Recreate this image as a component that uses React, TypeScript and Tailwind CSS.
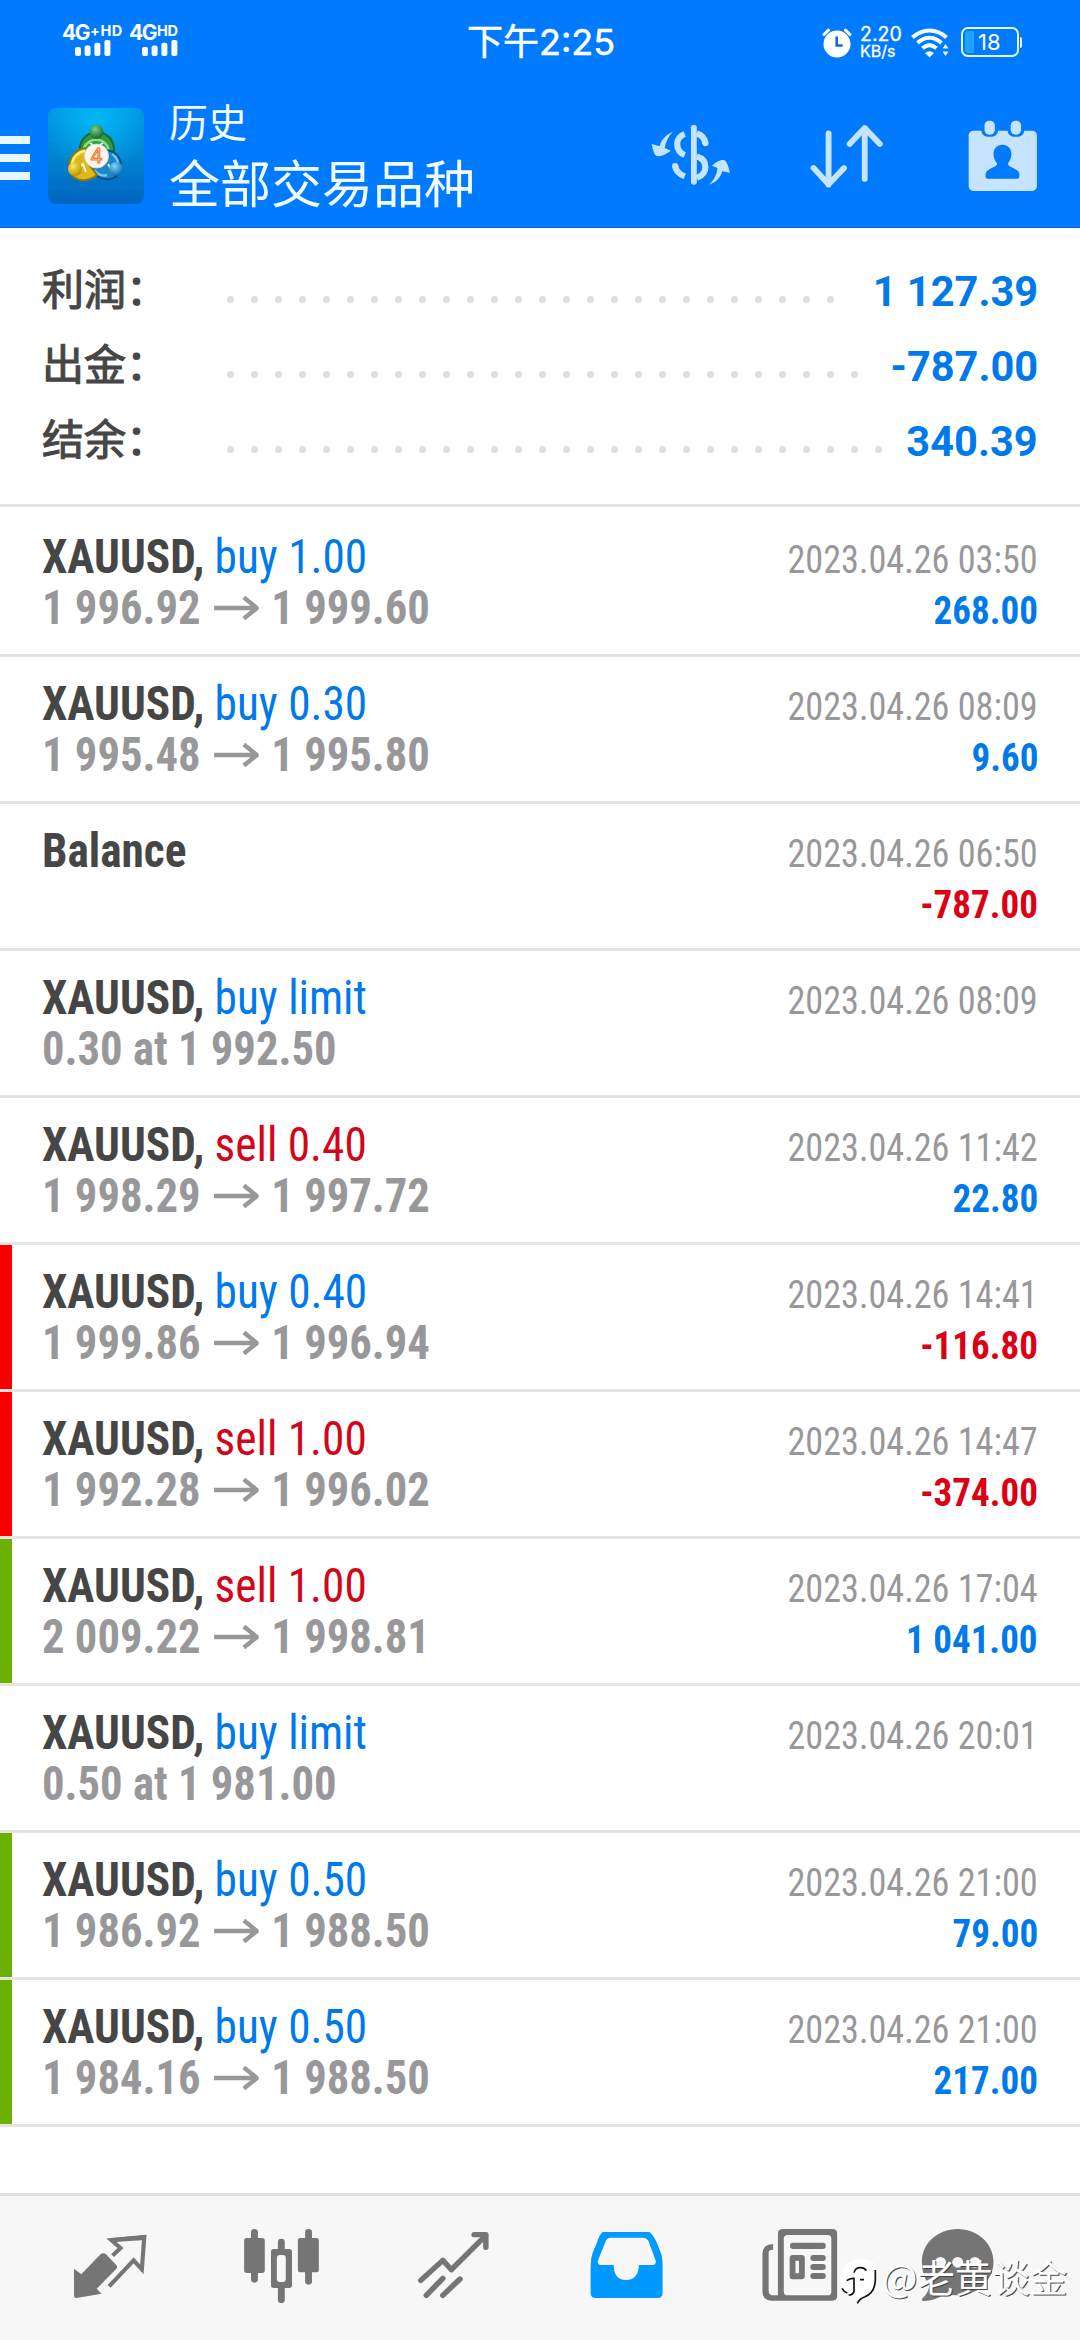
import type { ReactNode } from 'react'

type Side = 'buy' | 'sell'

interface Deal {
  symbol: string
  side?: Side
  action?: string
  from?: string
  to?: string
  note?: string
  time: string
  profit?: string
  mark?: 'sl' | 'tp'
}

const summary = [
  { label: '利润：', value: '1 127.39', dots: 26 },
  { label: '出金：', value: '-787.00', dots: 27 },
  { label: '结余：', value: '340.39', dots: 28 },
]

const deals: Deal[] = [
  { symbol: 'XAUUSD,', side: 'buy', action: 'buy 1.00', from: '1 996.92', to: '1 999.60', time: '2023.04.26 03:50', profit: '268.00' },
  { symbol: 'XAUUSD,', side: 'buy', action: 'buy 0.30', from: '1 995.48', to: '1 995.80', time: '2023.04.26 08:09', profit: '9.60' },
  { symbol: 'Balance', time: '2023.04.26 06:50', profit: '-787.00' },
  { symbol: 'XAUUSD,', side: 'buy', action: 'buy limit', note: '0.30 at 1 992.50', time: '2023.04.26 08:09' },
  { symbol: 'XAUUSD,', side: 'sell', action: 'sell 0.40', from: '1 998.29', to: '1 997.72', time: '2023.04.26 11:42', profit: '22.80' },
  { symbol: 'XAUUSD,', side: 'buy', action: 'buy 0.40', from: '1 999.86', to: '1 996.94', time: '2023.04.26 14:41', profit: '-116.80', mark: 'sl' },
  { symbol: 'XAUUSD,', side: 'sell', action: 'sell 1.00', from: '1 992.28', to: '1 996.02', time: '2023.04.26 14:47', profit: '-374.00', mark: 'sl' },
  { symbol: 'XAUUSD,', side: 'sell', action: 'sell 1.00', from: '2 009.22', to: '1 998.81', time: '2023.04.26 17:04', profit: '1 041.00', mark: 'tp' },
  { symbol: 'XAUUSD,', side: 'buy', action: 'buy limit', note: '0.50 at 1 981.00', time: '2023.04.26 20:01' },
  { symbol: 'XAUUSD,', side: 'buy', action: 'buy 0.50', from: '1 986.92', to: '1 988.50', time: '2023.04.26 21:00', profit: '79.00', mark: 'tp' },
  { symbol: 'XAUUSD,', side: 'buy', action: 'buy 0.50', from: '1 984.16', to: '1 988.50', time: '2023.04.26 21:00', profit: '217.00', mark: 'tp' },
]

function SignalBars() {
  return (
    <svg className="h-4 w-9" viewBox="0 0 36 16" fill="currentColor">
      <rect x="0" y="7" width="6" height="9" rx="2" />
      <rect x="9.6" y="5.5" width="6" height="10.5" rx="2" />
      <rect x="19.4" y="2.7" width="6" height="13.3" rx="2" />
      <rect x="29.4" y="0" width="6" height="16" rx="2" />
    </svg>
  )
}

function StatusBar() {
  return (
    <div className="flex h-[84px] font-['Inter','Noto_Sans_CJK_SC',sans-serif] text-white">
      <div className="flex w-[467px] pt-[24px] pl-[62px]">
        <div className="flex w-[67px] flex-col">
          <div className="flex h-[16px] text-[21px] leading-[18px] font-bold tracking-[-1.5px]">
            <span>4G</span>
            <span className="pl-px text-[14.5px] leading-[13px] tracking-[0.6px]">+HD</span>
          </div>
          <div className="pl-[13px]"><SignalBars /></div>
        </div>
        <div className="flex flex-col">
          <div className="flex h-[16px] text-[21px] leading-[18px] font-bold tracking-[-1.5px]">
            <span>4G</span>
            <span className="pl-px text-[14.5px] leading-[13px] tracking-[-0.3px]">HD</span>
          </div>
          <div className="pl-[13px]"><SignalBars /></div>
        </div>
      </div>
      <div className="w-[354px] pt-[16px] text-[36px] leading-[52px] whitespace-nowrap [-webkit-text-stroke:0.5px]">下午2:25</div>
      <svg className="mt-[27px] ml-px h-[32px] w-[32px]" viewBox="0 0 32 32">
        <circle cx="15" cy="17" r="13.5" fill="#fff" />
        <path d="M2 7.5 6.5 3.2M28 7.5 23.5 3.2" stroke="#fff" strokeWidth="3" strokeLinecap="round" />
        <path d="M14.7 9.5v9h6" fill="none" stroke="#0a6be0" strokeWidth="2.6" />
      </svg>
      <div className="mt-[25px] ml-[6px] w-[46px]">
        <div className="text-[19.5px] leading-[19px] [-webkit-text-stroke:0.3px]">2.20</div>
        <div className="text-[16px] leading-[15px] [-webkit-text-stroke:0.3px]">KB/s</div>
      </div>
      <svg className="mt-[27px] ml-[5px] h-[32px] w-[40px]" viewBox="0 0 40 32" fill="none" stroke="#f2fbff">
        <path d="M1.5 10.5C11.5 1 25.5 1 35.5 10.5" strokeWidth="4" />
        <path d="M6.5 16C14 9 23 9 30.5 16" strokeWidth="4" />
        <path d="M11.5 21.3C16 17.3 21 17.3 25.5 21.3" strokeWidth="4" />
        <path d="M14 26.2q4.500-4 9 0l-4.500 4z" fill="#f2fbff" stroke="none" />
        <path d="M31.500 21.500h6l-3-4.500zM31.500 24.500h6l-3 4.500z" fill="#d9f1ff" stroke="none" />
      </svg>
      <div className="mt-[27px] ml-[10px] flex h-[30px] items-center">
        <div className="flex h-[30px] w-[58px] items-center rounded-[7px] border-[2.5px] border-[#e6f8ff] pl-[2px]">
          <div className="h-[22px] w-[9px] rounded-l-[3px] bg-[#22a2ff]" />
          <div className="pl-[4px] text-[22px] leading-[24px]">18</div>
        </div>
        <div className="ml-px h-[11px] w-[2px] rounded-r bg-[#e6f8ff]" />
      </div>
    </div>
  )
}

function AppLogo() {
  return (
    <svg className="h-24 w-24" viewBox="0 0 96 96">
      <defs>
        <linearGradient id="bg" x1="0" y1="0" x2="0" y2="1">
          <stop offset="0" stopColor="#0296e6" />
          <stop offset="0.5" stopColor="#0284d0" />
          <stop offset="1" stopColor="#0063c0" />
        </linearGradient>
        <radialGradient id="glow" cx="0.5" cy="0.12" r="0.55">
          <stop offset="0" stopColor="#00b8f4" />
          <stop offset="1" stopColor="#00b8f4" stopOpacity="0" />
        </radialGradient>
        <radialGradient id="green" cx="0.4" cy="0.3" r="0.7">
          <stop offset="0" stopColor="#7ed07c" />
          <stop offset="1" stopColor="#13692e" />
        </radialGradient>
        <radialGradient id="gold" cx="0.35" cy="0.3" r="0.75">
          <stop offset="0" stopColor="#ffe95a" />
          <stop offset="1" stopColor="#b88d06" />
        </radialGradient>
        <radialGradient id="blue" cx="0.4" cy="0.3" r="0.7">
          <stop offset="0" stopColor="#7cd4fa" />
          <stop offset="1" stopColor="#0c6cb4" />
        </radialGradient>
      </defs>
      <rect width="96" height="96" rx="8" fill="url(#bg)" />
      <rect width="96" height="96" rx="8" fill="url(#glow)" />
      <path d="M16 0v96M32 0v96M48 0v96M64 0v96M80 0v96M0 16h96M0 32h96M0 48h96M0 64h96M0 80h96" stroke="#5cc4ff" strokeOpacity="0.06" />
      <path d="M32 42a17 17 0 1 1 30 10l-14-6z" fill="#2f9a45" stroke="#17692c" strokeWidth="2" />
      <path d="M36 40a13 13 0 0 1 25 3" fill="none" stroke="#8edc84" strokeWidth="2.5" />
      <path d="M58 42a16 16 0 0 1 15 16c0 10-8 14-16 13-8-1-13-6-14-14z" fill="#1b86cc" stroke="#0a4f8c" strokeWidth="2" />
      <path d="M64 46a13 13 0 0 1 6 12M46 62q6 7 13 5" fill="none" stroke="#6cc8f4" strokeWidth="2.5" />
      <path d="M38 40c-10 1-17 9-17 19 0 9 8 14 17 13 5-1 9-3 11-5l-10-13z" fill="#dcb916" stroke="#8c7808" strokeWidth="2" />
      <path d="M24 57a15 15 0 0 1 13-14" fill="none" stroke="#fff07a" strokeWidth="2.5" />
      <path d="m42 35 6 4 7-4M31 60l4-4 3 8M60 56l3 5 4-4" fill="none" stroke="#eef8e8" strokeWidth="2" />
      <circle cx="48.5" cy="24" r="7" fill="url(#green)" />
      <circle cx="27" cy="61" r="7" fill="url(#gold)" />
      <circle cx="68" cy="61" r="7" fill="url(#blue)" />
      <circle cx="48.5" cy="48" r="12" fill="#fdf6f0" stroke="#d8d8d0" />
      <text x="48.5" y="55" textAnchor="middle" fontFamily="Inter, sans-serif" fontSize="20" fill="#ffe0c0" stroke="#f07a30" strokeWidth="1.1">4</text>
    </svg>
  )
}

function Toolbar() {
  return (
    <div className="flex h-36 items-center pr-[42px] font-['Noto_Sans_CJK_SC',sans-serif] text-[#f2fbff]">
      <div className="mt-1 flex w-[30px] flex-col gap-[10px]">
        <span className="h-2 bg-[#e9f6ff]" />
        <span className="h-2 bg-[#e9f6ff]" />
        <span className="h-2 bg-[#e9f6ff]" />
      </div>
      <div className="ml-[18px]"><AppLogo /></div>
      <div className="mb-[8px] ml-[25px] flex flex-1 flex-col">
        <span className="h-[57px] text-[39px] leading-[56px]">历史</span>
        <span className="h-[64px] text-[51px] leading-[64px] whitespace-nowrap">全部交易品种</span>
      </div>
      <svg className="h-[73.3px] w-[79.9px]" viewBox="320 355 232 220" preserveAspectRatio="none" fill="#c6e4ff">
        <rect x="436" y="373" width="17" height="179" rx="7" />
        <path d="M383 393C365 402 350 415 345 437L322 430C325 445 328 458 333 464C340 470 355 466 378 450L360 442C362 425 370 408 383 393ZM489 552C510 545 522 530 527 512L549 516C546 500 542 488 536 480C530 476 515 478 497 495L513 502C512 520 503 538 489 552Z" />
        <g fill="none" stroke="#c6e4ff" strokeWidth="18">
          <path d="M418 400Q396 408 396 431Q397 455 418 463M453 467Q478 475 478 499Q478 521 453 532" />
          <path d="M453 398Q475 405 478 428M390 496Q394 518 418 527" />
        </g>
        <circle cx="478" cy="428" r="9" />
        <circle cx="390" cy="496" r="9" />
      </svg>
      <svg className="ml-[79.3px] h-[73.3px] w-[73.3px]" viewBox="782 355 213 220" preserveAspectRatio="none" fill="none" stroke="#c6e4ff" strokeWidth="17" strokeLinecap="round" strokeLinejoin="round">
        <path d="M836 398V552M792 502L836 551L881 502M941 535V382M897 430L941 382L985 430" />
      </svg>
      <svg className="ml-[84.7px] h-[73.3px] w-[69.6px]" viewBox="1241 355 202 220" preserveAspectRatio="none">
        <rect x="1243" y="390" width="198" height="181" rx="14" fill="#c6e4ff" />
        <rect x="1280" y="350" width="48" height="58" rx="18" fill="#007bff" />
        <rect x="1356" y="350" width="48" height="58" rx="18" fill="#007bff" />
        <rect x="1289" y="360" width="30" height="42" rx="14" fill="#c6e4ff" />
        <rect x="1365" y="360" width="30" height="42" rx="14" fill="#c6e4ff" />
        <path d="M1341 432c16 0 26 12 26 28 0 14-6 22-10 29 2 13 33 14 33 32v8q0 5-6 5h-86q-6 0-6-5v-8c0-18 33-20 34-32-5-7-11-15-11-29 0-16 10-28 26-28z" fill="#007bff" />
      </svg>
    </div>
  )
}

function Summary() {
  return (
    <section className="h-[279px] border-b-[3px] border-[#e4e4e4] pt-[25px]">
      {summary.map((row) => (
        <div key={row.label} className="flex h-[75px] pr-[42px] pl-[42px]">
          <span className="w-[176px] font-['Noto_Sans_CJK_SC',sans-serif] text-[42px] leading-[68px] text-[#464646] [-webkit-text-stroke:1.1px]">
            {row.label}
          </span>
          <span className="flex pt-[43px]">
            {Array.from({ length: row.dots }, (_, i) => (
              <i key={i} className="mx-[8.5px] h-[7px] w-[7px] rounded-full bg-[#dedede]" />
            ))}
          </span>
          <span className="ml-auto origin-right scale-x-[0.99] font-['Roboto',sans-serif] text-[42px] leading-[78px] font-bold whitespace-nowrap text-[#007aea]">
            {row.value}
          </span>
        </div>
      ))}
    </section>
  )
}

function PriceArrow() {
  return (
    <svg className="mx-[14px] h-[24px] w-[48px] self-center" viewBox="0 0 48 24" fill="none" stroke="#98989a" strokeWidth="4.6">
      <path d="M0 12H46M32 1.500 46 12 32 22.500" />
    </svg>
  )
}

function DealRow({ deal }: { deal: Deal }) {
  const actionColor = deal.side === 'sell' ? 'text-[#d2061a]' : 'text-[#007aea]'
  const profitColor = deal.profit?.startsWith('-') ? 'text-[#dc0014]' : 'text-[#007aea]'
  const markColor = deal.mark === 'sl' ? 'bg-[#f80000]' : deal.mark === 'tp' ? 'bg-[#6cb000]' : ''

  return (
    <div className="flex h-[147px] border-b-[3px] border-[#e4e4e4] font-['Roboto_Condensed','Roboto',sans-serif] whitespace-nowrap [font-stretch:75%]">
      <div className={`w-3 ${markColor}`} />
      <div className="flex flex-1 flex-col pt-[21px] pr-[42px] pl-[30px]">
        <div className="flex h-[51px] items-baseline justify-between leading-[51px]">
          <span className="origin-left scale-x-[0.944] text-[48px]">
            <b className="text-[#464646]">{deal.symbol}</b>
            <span className={actionColor}> {deal.action}</span>
          </span>
          <span className="origin-right scale-x-[0.928] text-[39px] text-[#98989a]">{deal.time}</span>
        </div>
        <div className="flex h-[51px] items-baseline justify-between leading-[51px] font-bold">
          <span className="flex origin-left scale-x-[0.93] text-[48px] text-[#98989a]">
            {deal.from ?? deal.note ?? '\u00a0'}
            {deal.to && <PriceArrow />}
            {deal.to}
          </span>
          <span className={`origin-right scale-x-[0.95] text-[39px] ${profitColor}`}>{deal.profit}</span>
        </div>
      </div>
    </div>
  )
}

function Tab({ x, children }: { x: number; children: ReactNode }) {
  return (
    <svg className="h-36 w-[172px]" viewBox={`${x} 48 499.5 432`} preserveAspectRatio="none" fill="#757575">
      {children}
    </svg>
  )
}

function TabBar() {
  return (
    <nav className="relative mt-auto flex h-[147px] border-t-[3px] border-[#e0e0e0] bg-[#f7f7f7] pl-6">
      <Tab x={69.7}>
        <path d="M215 266L236 283L292 223Q300 216 308 223L338 256Q342 261 338 266L281 326L295 341L222 354Q215 354 215 348Z" />
        <path d="M327 227L350 204L323 180L419 171L412 268L388 241L317 319" fill="none" stroke="#757575" strokeWidth="12" />
        <path d="M318 175L425 165L423 180L330 186Z" />
      </Tab>
      <Tab x={569.2}>
        <rect x="709" y="174" width="60" height="105" rx="8" />
        <rect x="787" y="207" width="61" height="117" rx="8" />
        <rect x="865" y="174" width="61" height="103" rx="8" />
        <rect x="729" y="147" width="20" height="161" rx="10" />
        <rect x="807" y="176" width="20" height="193" rx="10" />
        <rect x="886" y="147" width="20" height="167" rx="10" />
        <rect x="804" y="225" width="26" height="81" rx="9" fill="#f7f7f7" />
      </Tab>
      <Tab x={1068.7}>
        <g fill="none" stroke="#757575" strokeWidth="16" strokeLinecap="round" strokeLinejoin="round">
          <path d="M1222 301L1286 241L1311 269L1405 172" />
          <path d="M1377 164H1411V202" />
          <path d="M1238 346L1286 295M1286 346L1336 297" />
        </g>
      </Tab>
      <Tab x={0}>
        <path d="M182 156H318Q330 166 340 190L352 222Q356 235 356 260V340Q356 354 342 354H162Q147 354 147 340V260Q147 235 153 218L166 186Q172 166 182 156Z" fill="#0099ff" />
        <path d="M203 173H301Q311 174 315 183L336 242Q338 254 327 255H287C287 282 275 300 250 300S214 282 214 255H177Q166 254 168 242L192 181Q196 174 203 173Z" fill="#f7f7f7" />
      </Tab>
      <Tab x={499.5}>
        <path d="M677 192V209Q664 208 664 218V332Q664 346 678 346H691V160Q691 147 706 147H849Q863 147 863 161V348Q863 362 849 362H672Q646 362 646 334V222Q646 192 677 192Z" />
        <rect x="708" y="165" width="138" height="181" rx="11" fill="#f7f7f7" />
        <rect x="726" y="188" width="104" height="19" rx="9" />
        <rect x="725" y="225" width="44" height="73" rx="9" />
        <rect x="742" y="242" width="10" height="38" rx="2" fill="#f7f7f7" />
        <rect x="785" y="225" width="45" height="18" rx="9" />
        <rect x="785" y="252" width="45" height="18" rx="9" />
        <rect x="785" y="279" width="45" height="18" rx="9" />
      </Tab>
      <Tab x={999}>
        <path d="M1213 147C1270 147 1317 190 1317 246C1317 300 1272 346 1213 346Q1192 346 1174 341Q1150 362 1113 363Q1107 362 1110 356Q1128 340 1131 315Q1109 288 1109 246C1109 190 1155 147 1213 147Z" />
        <circle cx="1163" cy="247" r="16" fill="#f7f7f7" />
        <circle cx="1213" cy="247" r="16" fill="#f7f7f7" />
        <circle cx="1263" cy="247" r="16" fill="#f7f7f7" />
      </Tab>
      <div className="absolute top-[60px] left-[838px] flex text-white">
        <svg className="mt-[2px] h-[48px] w-[44px]" viewBox="24 114 132 144">
          <path d="M85 118H105Q137 122 137 152V185Q136 220 104 230Q90 236 83 248V232Q34 226 31 176Q36 122 85 118Z" fill="#fff" />
          <path d="M136 150V180Q135 218 105 230Q88 236 82 250" fill="none" stroke="#111" strokeWidth="5" />
          <path d="M72 158Q76 142 92 143Q104 144 109 152M50 182Q60 174 72 175V215Q66 228 56 224M90 179H102M36 205Q42 216 52 219" fill="none" stroke="#111" strokeWidth="5" />
        </svg>
        <span className="font-['Noto_Sans_CJK_SC',sans-serif] text-[37.5px] leading-[39px] [text-shadow:1px_1px_0_#444]">@老黄谈金</span>
      </div>
    </nav>
  )
}

export default function App() {
  return (
    <div className="flex h-[2340px] w-[1080px] flex-col overflow-hidden bg-white">
      <header className="h-[228px] border-b border-[#0a62c4] bg-[#007bff]">
        <StatusBar />
        <Toolbar />
      </header>
      <Summary />
      <main className="pt-[3px]">
        {deals.map((deal, i) => (
          <DealRow key={i} deal={deal} />
        ))}
      </main>
      <TabBar />
    </div>
  )
}
